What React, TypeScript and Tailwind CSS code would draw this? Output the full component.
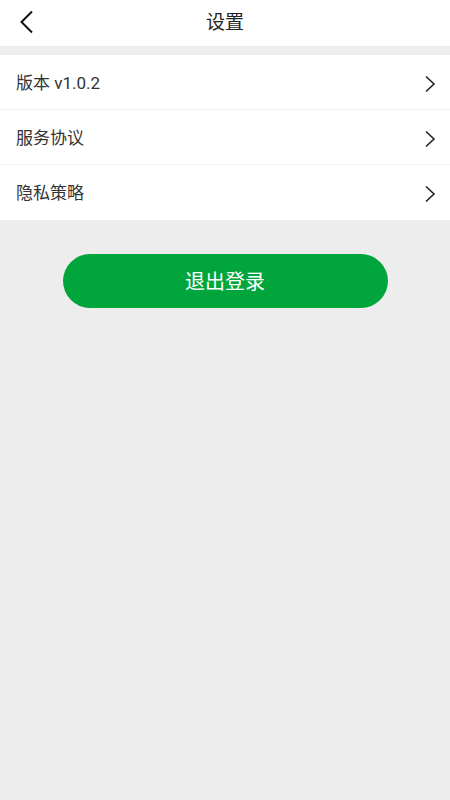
const items = ["版本 v1.0.2", "服务协议", "隐私策略"];

function Chevron() {
  return (
    <svg width="12" height="18" viewBox="0 0 12 18" className="shrink-0">
      <path d="M2 1.5 L10 9 L2 16.5" fill="none" stroke="#222" strokeWidth="1.6" />
    </svg>
  );
}

export default function App() {
  return (
    <div
      className="flex min-h-[800px] w-[450px] flex-col bg-[#ededed]"
      style={{ fontFamily: 'Roboto, "Noto Sans CJK SC", sans-serif' }}
    >
      <header className="relative flex h-[46px] items-center justify-center bg-white">
        <button className="absolute left-[18px] top-[10px] p-0">
          <svg width="18" height="24" viewBox="0 0 18 24">
            <path d="M14 1.5 L3.5 12 L14 22.5" fill="none" stroke="#111" strokeWidth="2" />
          </svg>
        </button>
        <h1 className="text-[19px] text-[#222]">设置</h1>
      </header>

      <ul className="mt-[9px] bg-white">
        {items.map((label, i) => (
          <li
            key={label}
            className={`flex h-[55px] items-center justify-between pl-4 pr-[14px] pt-[3px] ${
              i < items.length - 1 ? "border-b border-[#f2f2f2]" : ""
            }`}
          >
            <span className="text-[17px] text-[#333]">{label}</span>
            <Chevron />
          </li>
        ))}
      </ul>

      <div className="flex justify-center pt-[34px]">
        <button className="h-[54px] w-[325px] rounded-full bg-[#00a53c] pt-[2px] text-[20px] text-white">
          退出登录
        </button>
      </div>
    </div>
  );
}
